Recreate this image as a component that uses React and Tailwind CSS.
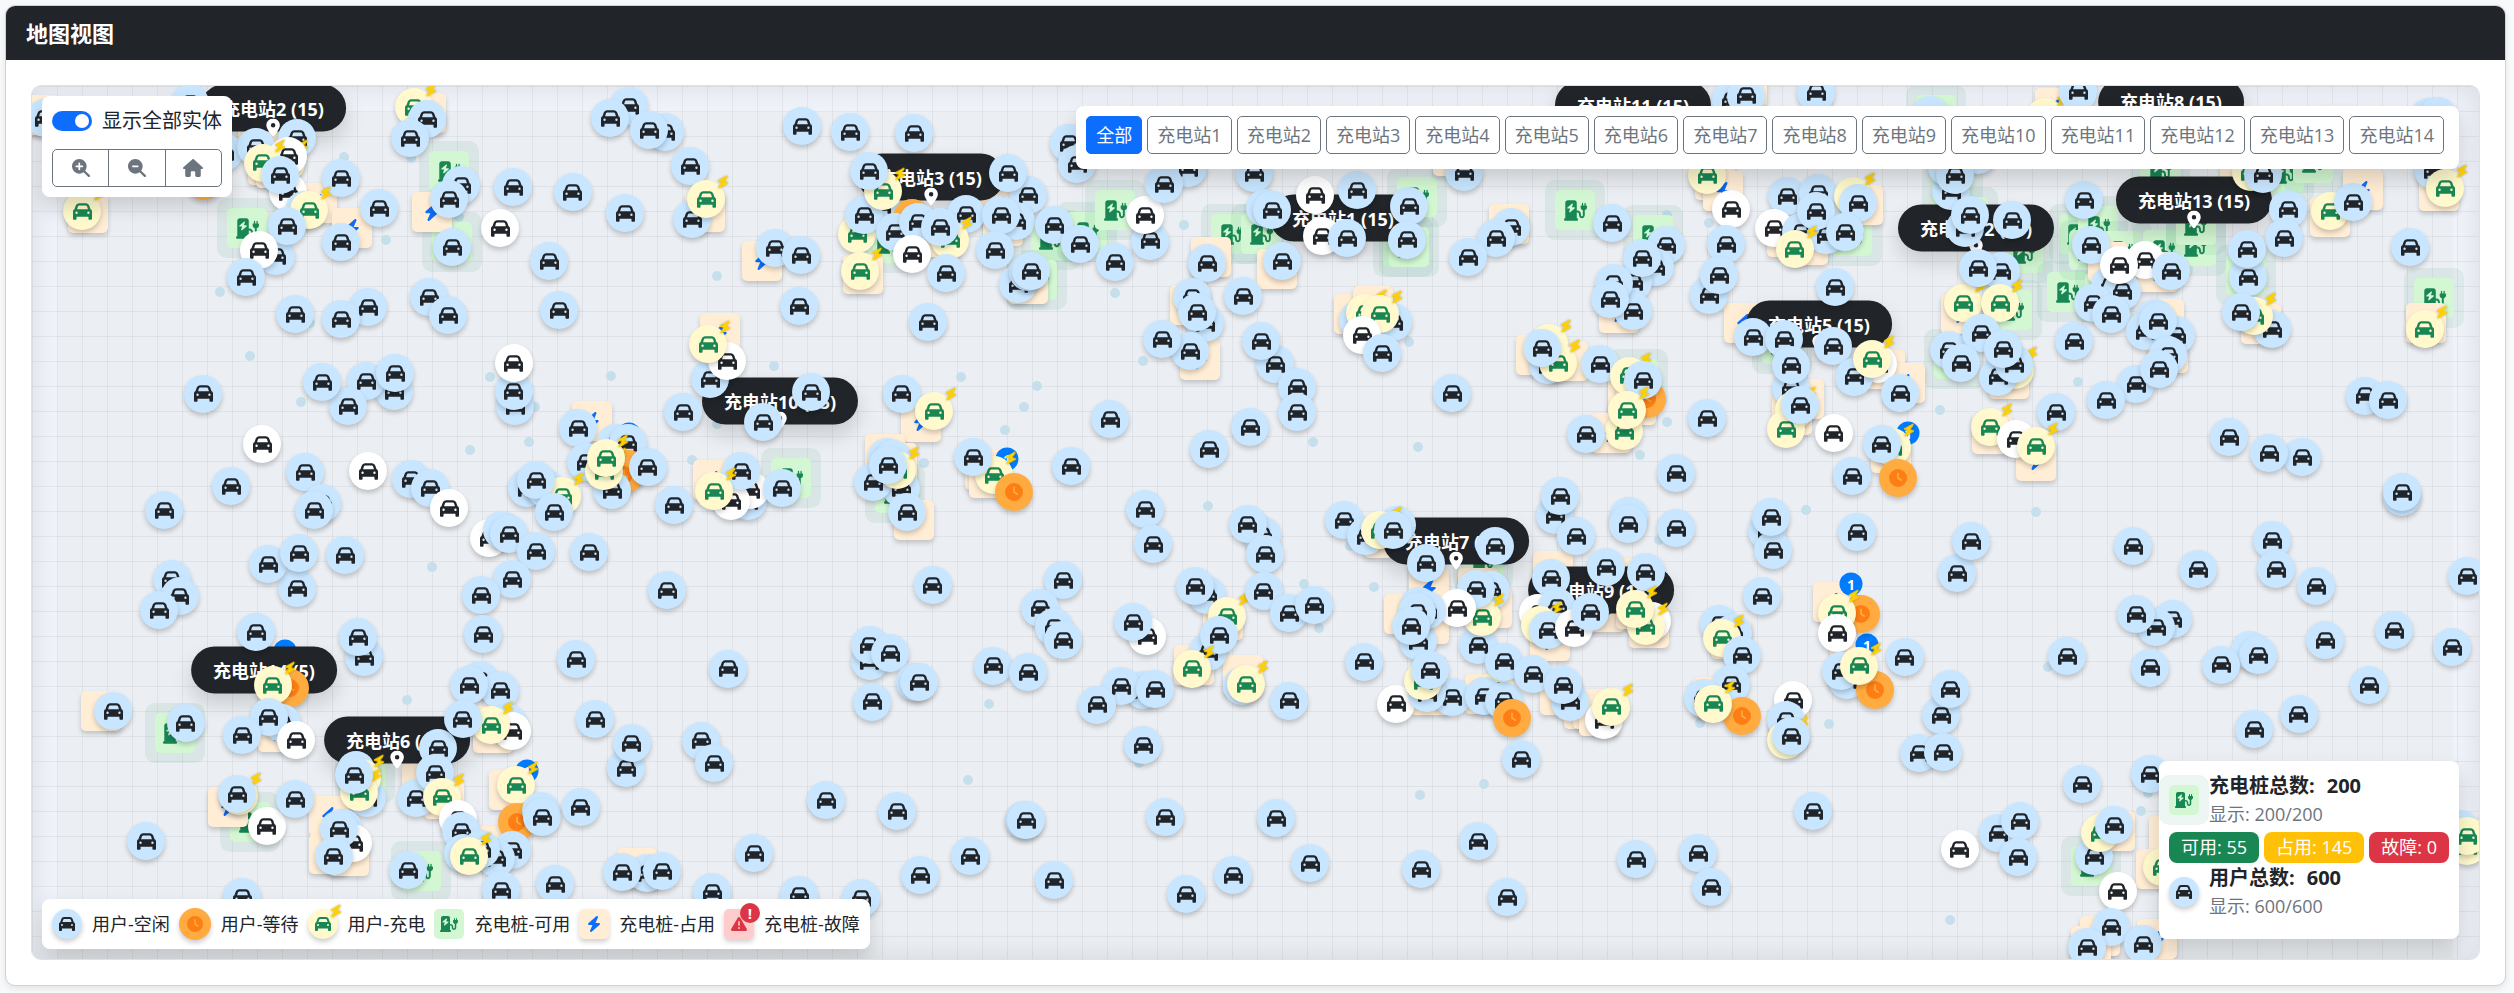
import React, { useState } from 'react';
import {
  FaCar,
  FaClock,
  FaBolt,
  FaChargingStation,
  FaLocationDot,
  FaMagnifyingGlassPlus,
  FaMagnifyingGlassMinus,
  FaHouse,
  FaTriangleExclamation,
} from 'react-icons/fa6';

// World rectangle that the map viewport shows.
const VIEW = { x: 32, y: 86, w: 2447, h: 873 };

const at = (x, y) => ({
  left: `${((x - VIEW.x) / VIEW.w) * 100}%`,
  top: `${((y - VIEW.y) / VIEW.h) * 100}%`,
});

const DOTS = [
  [344, 157], [411, 158], [386, 240], [220, 292], [250, 356], [301, 402], [490, 377], [611, 376], [535, 407],
  [529, 442], [470, 450], [459, 217], [310, 323], [717, 276], [774, 366], [961, 377], [1037, 386], [1024, 407],
  [1005, 430], [924, 463], [692, 460], [717, 424], [1115, 293], [1143, 361], [1184, 225], [1409, 342], [1313, 442],
  [1418, 447], [1667, 422], [1640, 455], [1709, 223], [1667, 215], [2078, 382], [1940, 410], [432, 567], [407, 700],
  [989, 704], [968, 780], [1208, 506], [1139, 763], [1304, 584], [1374, 587], [1319, 628], [1350, 546], [1484, 784],
  [1420, 795], [1806, 510], [1829, 724], [1700, 723], [1659, 540], [2036, 512], [2048, 667], [2141, 811],
  [1950, 920], [2148, 793],
];

const FREE_PILES = [
  [449, 171], [247, 228], [452, 242], [887, 243], [1051, 240], [1087, 232], [1115, 210], [1037, 280], [1231, 234],
  [1261, 234], [791, 478], [895, 493], [1417, 197], [1403, 247], [1409, 247], [1575, 210], [1653, 235], [1852, 236],
  [1638, 379], [1782, 344], [1936, 115], [1952, 190], [1968, 217], [2023, 253], [2012, 310], [1954, 359],
  [2067, 292], [2079, 234], [2089, 250], [2098, 226], [2122, 251], [2105, 293], [2163, 250], [2196, 246],
  [2196, 225], [2160, 170], [2284, 173], [2313, 163], [2246, 275], [2434, 298], [175, 733], [250, 822], [365, 773],
  [421, 871], [1483, 560], [2091, 866],
];

const BUSY_PILES = [
  [38, 115], [182, 115], [88, 213], [426, 113], [258, 130], [268, 165], [276, 168], [317, 203], [352, 228],
  [432, 212], [592, 421], [705, 212], [762, 261], [720, 333], [863, 274], [921, 422], [885, 454], [897, 463],
  [713, 480], [985, 470], [989, 478], [1000, 205], [1003, 226], [940, 237], [1028, 284], [1211, 257], [1190, 305],
  [1200, 360], [1277, 269], [914, 520], [1747, 86], [1453, 156], [1715, 180], [1723, 191], [1509, 224],
  [1863, 205], [1787, 237], [1808, 245], [1354, 314], [1373, 306], [1619, 313], [1536, 355], [1568, 361],
  [1628, 393], [1636, 405], [1611, 433], [1744, 323], [1804, 399], [1792, 415], [1885, 369], [1905, 383],
  [1891, 453], [2055, 108], [2339, 125], [2363, 190], [2330, 217], [2439, 191], [1961, 314], [2009, 379],
  [1992, 434], [2036, 461], [2108, 262], [2158, 272], [2164, 319], [2168, 353], [2261, 324], [2426, 323],
  [2240, 167], [101, 711], [278, 732], [493, 726], [493, 733], [228, 807], [329, 816], [329, 854], [349, 856],
  [422, 783], [444, 799], [509, 790], [482, 846], [637, 868], [1223, 620], [1194, 665], [1243, 675], [1384, 538],
  [1429, 588], [1404, 614], [1478, 588], [1492, 608], [1429, 624], [1553, 571], [1619, 578], [1430, 695],
  [1485, 694], [1560, 695], [1584, 709], [1593, 709], [1599, 716], [1550, 641], [1605, 612], [1649, 628],
  [1731, 639], [1713, 697], [1789, 726], [1833, 602], [1850, 663], [2115, 831], [2169, 836], [2156, 869],
  [2100, 936], [2091, 946], [2157, 939], [1636, 609],
];

const QUEUES = [[629, 434], [1007, 459], [1908, 433], [285, 651], [527, 771], [1851, 584], [1867, 645]];

const STATIONS = [
  ['充电站1 (15)', 1343, 218],
  ['充电站2 (15)', 273, 108],
  ['充电站3 (15)', 931, 177],
  ['充电站5 (15)', 1819, 324],
  ['充电站6 (15)', 397, 740],
  ['充电站7 (15)', 1456, 541],
  ['充电站8 (15)', 2171, 102],
  ['充电站9 (15)', 1601, 590],
  ['充电站10 (15)', 780, 401],
  ['充电站11 (15)', 1633, 105],
  ['充电站12 (15)', 1976, 228],
  ['充电站13 (15)', 2194, 200],
  ['充电站14 (5)', 264, 670],
];

const I = 'idle';
const W = 'moving';
const C = 'charging';
const Q = 'waiting';

const USERS = [
  [I, 45, 118], [I, 190, 103], [Q, 204, 181], [I, 224, 152], [C, 82, 211], [C, 414, 107], [I, 427, 119],
  [I, 410, 138], [I, 297, 138], [I, 256, 147], [C, 286, 163], [W, 288, 156], [C, 263, 163], [W, 288, 192],
  [I, 280, 175], [I, 341, 178], [I, 304, 210], [C, 309, 210], [I, 379, 208], [I, 276, 256], [I, 287, 226],
  [W, 259, 250], [I, 246, 277], [I, 341, 242], [I, 461, 185], [I, 449, 199], [I, 513, 187], [I, 573, 192],
  [I, 625, 213], [W, 500, 228], [I, 452, 247], [I, 549, 261], [I, 429, 297], [I, 448, 315], [I, 559, 310],
  [I, 368, 307], [I, 341, 319], [I, 295, 314], [I, 515, 406], [I, 514, 391], [W, 514, 363], [I, 394, 391],
  [I, 366, 381], [I, 395, 373], [I, 348, 406], [I, 322, 382], [I, 203, 394], [W, 262, 444], [W, 368, 471],
  [I, 578, 428], [I, 305, 472], [I, 231, 486], [I, 411, 479], [I, 430, 488], [W, 449, 508], [I, 629, 106],
  [I, 616, 443], [I, 628, 443], [I, 586, 462], [Q, 628, 469], [Q, 624, 475], [I, 612, 490], [C, 604, 471],
  [C, 606, 458], [I, 527, 488], [I, 545, 488], [C, 562, 496], [I, 536, 480], [I, 554, 512],
  [I, 610, 118], [I, 665, 132], [I, 649, 130], [I, 802, 126], [I, 850, 132], [I, 914, 133], [I, 690, 166],
  [I, 692, 219], [C, 706, 199], [I, 775, 248], [I, 801, 255], [I, 799, 306], [I, 928, 322], [C, 857, 234],
  [I, 881, 205], [I, 864, 215], [C, 883, 191], [I, 869, 171], [I, 966, 214], [Q, 912, 218], [I, 895, 232],
  [I, 918, 222], [C, 950, 240], [I, 940, 227], [W, 912, 254], [I, 946, 273], [C, 860, 271], [I, 1028, 195],
  [I, 1016, 221], [I, 1001, 215], [I, 1008, 173], [I, 995, 250], [I, 1054, 225], [I, 1080, 244], [I, 1115, 262],
  [I, 1150, 241], [W, 1145, 215], [I, 1018, 284], [I, 1028, 272], [I, 1031, 271], [I, 1069, 143], [I, 1077, 164],
  [I, 1188, 168], [I, 1164, 184], [I, 1254, 173], [I, 1207, 263], [I, 1265, 208], [I, 1272, 210], [I, 1192, 297],
  [I, 1205, 323], [I, 1197, 312], [I, 1190, 351], [I, 1162, 339], [I, 1243, 296], [I, 1275, 364], [I, 1261, 341],
  [I, 1110, 419], [I, 1250, 427], [I, 1209, 449], [I, 1071, 466], [I, 710, 379], [W, 727, 361], [C, 708, 344],
  [I, 683, 412], [I, 811, 392], [I, 763, 422], [I, 902, 394], [C, 934, 411], [I, 887, 457], [I, 893, 459],
  [I, 901, 488], [I, 873, 482], [C, 897, 470], [I, 888, 465], [I, 907, 512], [C, 994, 475], [I, 973, 457],
  [Q, 1014, 492], [I, 648, 467], [I, 748, 501], [W, 750, 490], [W, 731, 501], [I, 741, 471], [C, 714, 491],
  [I, 782, 488], [I, 674, 505], [I, 1145, 509],
  [I, 1731, 100], [I, 1746, 96], [I, 1816, 93], [I, 1464, 172], [W, 1315, 195], [I, 1357, 190], [W, 1322, 236],
  [I, 1347, 238], [I, 1409, 206], [I, 1407, 240], [I, 1282, 261], [I, 1511, 227], [I, 1496, 238], [I, 1468, 257],
  [I, 1612, 223], [I, 1666, 245], [I, 1655, 267], [I, 1633, 282], [I, 1642, 258], [I, 1633, 311], [I, 1614, 283],
  [I, 1610, 299], [I, 1358, 320], [I, 1393, 322], [C, 1365, 313], [C, 1380, 314], [W, 1362, 335], [I, 1382, 353],
  [I, 1452, 393], [I, 1297, 387], [I, 1297, 412], [C, 1549, 343], [I, 1548, 365], [C, 1558, 363], [I, 1542, 348],
  [I, 1600, 364], [C, 1629, 376], [Q, 1647, 399], [I, 1643, 380], [C, 1624, 431], [C, 1627, 410], [I, 1586, 434],
  [I, 1707, 418], [I, 1676, 473], [C, 1707, 175], [W, 1731, 209], [I, 1726, 244], [I, 1709, 295], [I, 1719, 275],
  [I, 1787, 196], [W, 1774, 228], [I, 1818, 193], [C, 1853, 196], [I, 1858, 203], [I, 1801, 232], [I, 1826, 235],
  [I, 1816, 211], [I, 1845, 232], [C, 1795, 249], [I, 1835, 287], [I, 1753, 337], [I, 1784, 339], [I, 1833, 346],
  [I, 1791, 388], [I, 1791, 365], [W, 1878, 364], [I, 1854, 377], [C, 1872, 359], [I, 1900, 393], [C, 1794, 410],
  [C, 1786, 429], [I, 1800, 405], [W, 1834, 433], [C, 1892, 447], [I, 1882, 444], [Q, 1898, 478], [I, 1852, 476],
  [I, 1930, 115], [C, 2045, 117], [I, 2078, 92], [I, 2429, 117], [I, 2438, 116], [I, 1951, 191], [I, 1978, 155],
  [I, 1947, 167], [I, 1955, 175], [I, 1965, 228], [I, 1970, 215], [I, 2012, 220], [I, 2001, 271], [C, 1963, 303],
  [I, 1978, 268], [C, 2000, 303], [I, 1949, 350], [I, 1981, 333], [I, 1961, 363], [C, 2015, 370], [I, 1998, 377],
  [I, 2014, 364], [I, 2003, 349], [C, 1990, 427], [W, 2016, 439], [I, 2056, 412], [C, 2036, 446], [I, 2074, 341],
  [I, 2084, 200], [I, 2091, 245], [I, 2110, 285], [W, 2145, 260], [I, 2122, 291], [W, 2119, 265], [I, 2171, 271],
  [I, 2093, 303], [I, 2111, 314], [I, 2155, 318], [I, 2145, 331], [I, 2176, 335], [I, 2158, 321], [I, 2168, 355],
  [I, 2136, 384], [I, 2159, 369], [I, 2106, 400], [C, 2251, 172], [I, 2263, 174], [I, 2288, 209], [I, 2284, 238],
  [I, 2248, 277], [I, 2247, 249], [I, 2272, 329], [C, 2254, 316], [I, 2241, 312], [C, 2330, 211], [I, 2353, 202],
  [I, 2410, 247], [I, 2433, 170], [C, 2445, 188], [C, 2425, 329], [I, 2365, 396], [I, 2388, 400], [I, 2229, 437],
  [I, 2302, 457], [I, 2269, 453], [I, 2402, 497], [I, 2402, 492],
  [I, 164, 510], [I, 322, 503], [I, 314, 510], [I, 297, 588], [I, 268, 564], [I, 299, 553], [I, 345, 555],
  [I, 172, 579], [I, 180, 596], [I, 159, 610], [I, 256, 632], [Q, 290, 688], [C, 273, 685], [I, 364, 657],
  [I, 358, 637], [W, 489, 538], [I, 502, 530], [I, 509, 534], [I, 536, 551], [I, 589, 552], [I, 512, 579],
  [I, 481, 595], [I, 483, 634], [I, 576, 659], [I, 480, 680], [I, 500, 690], [I, 469, 685], [I, 113, 711],
  [I, 186, 723], [I, 282, 723], [I, 269, 717], [I, 242, 735], [W, 296, 740], [I, 438, 748], [I, 508, 723],
  [W, 512, 731], [C, 491, 725], [I, 463, 719], [I, 595, 719], [I, 626, 768], [I, 632, 743], [C, 239, 796],
  [I, 237, 794], [W, 267, 826], [I, 295, 799], [I, 146, 841], [I, 356, 770], [I, 367, 798], [C, 362, 778],
  [C, 359, 792], [I, 354, 775], [I, 343, 828], [W, 353, 843], [I, 339, 829], [I, 334, 856], [I, 416, 798],
  [I, 435, 773], [C, 442, 797], [W, 458, 819], [I, 461, 831], [C, 516, 785], [Q, 517, 822], [I, 541, 811],
  [I, 542, 817], [I, 581, 807], [I, 512, 850], [I, 496, 858], [I, 463, 853], [I, 481, 849], [C, 469, 856],
  [I, 501, 890], [I, 555, 884], [I, 408, 870], [I, 242, 897], [I, 647, 873], [I, 622, 872], [I, 662, 871],
  [I, 667, 590], [I, 933, 585], [I, 728, 669], [I, 1063, 580], [I, 1040, 608], [I, 1054, 627], [I, 1063, 640],
  [I, 1153, 544], [I, 1262, 535], [I, 1248, 524], [I, 1265, 554], [I, 1207, 595], [I, 1195, 586], [C, 1227, 616],
  [I, 1208, 652], [I, 1219, 635], [C, 1192, 669], [I, 1242, 686], [C, 1246, 684], [I, 1264, 591], [W, 1147, 636],
  [I, 1133, 622], [I, 870, 661], [I, 870, 645], [I, 890, 653], [I, 872, 702], [I, 915, 682], [I, 919, 682],
  [I, 993, 666], [I, 1028, 672], [I, 1143, 690], [I, 1121, 686], [I, 1097, 705], [I, 1155, 689], [I, 1143, 745],
  [I, 701, 741], [I, 714, 763], [I, 826, 800], [I, 897, 811], [I, 754, 853], [I, 1024, 820], [I, 1026, 820],
  [I, 1165, 817], [I, 712, 892], [I, 799, 895], [I, 861, 898], [I, 920, 875], [I, 970, 856], [I, 1054, 880],
  [I, 1186, 894], [I, 1233, 875], [I, 1276, 818],
  [I, 1344, 520], [I, 1366, 536], [I, 1397, 525], [C, 1380, 530], [I, 1393, 530], [I, 1495, 546], [I, 1426, 563],
  [I, 1555, 515], [I, 1560, 496], [I, 1629, 516], [I, 1628, 524], [I, 1576, 536], [I, 1676, 528], [I, 1767, 531],
  [I, 1773, 550], [I, 1771, 517], [I, 1857, 532], [I, 1551, 578], [I, 1606, 567], [I, 1646, 572], [I, 1762, 596],
  [I, 1289, 613], [I, 1314, 605], [I, 1478, 645], [I, 1491, 590], [C, 1482, 617], [I, 1476, 589], [W, 1457, 608],
  [I, 1418, 641], [I, 1419, 606], [I, 1427, 610], [I, 1417, 612], [I, 1411, 626], [I, 1364, 662], [W, 1396, 704],
  [I, 1289, 701], [I, 1452, 697], [I, 1427, 693], [C, 1423, 681], [I, 1430, 670], [C, 1496, 690], [I, 1484, 696],
  [I, 1504, 701], [I, 1504, 662], [I, 1533, 674], [Q, 1512, 718], [I, 1570, 702], [I, 1563, 685], [W, 1604, 720],
  [C, 1611, 707], [I, 1521, 759], [W, 1538, 613], [I, 1557, 607], [C, 1540, 625], [I, 1548, 630], [W, 1574, 628],
  [I, 1590, 612], [W, 1652, 621], [C, 1646, 626], [C, 1635, 609], [I, 1719, 624], [I, 1733, 633], [C, 1722, 638],
  [I, 1742, 655], [I, 1731, 684], [I, 1703, 698], [Q, 1742, 716], [C, 1713, 704], [W, 1793, 700], [I, 1786, 720],
  [C, 1786, 740], [I, 1791, 736], [Q, 1861, 614], [C, 1837, 613], [W, 1837, 633], [I, 1847, 680], [I, 1841, 671],
  [Q, 1875, 690], [C, 1859, 666], [I, 1813, 811], [I, 1478, 841], [I, 1421, 869], [I, 1310, 863], [I, 1507, 897],
  [I, 1636, 859], [I, 1698, 853], [I, 1711, 887],
  [I, 1957, 573], [I, 1971, 541], [I, 2133, 546], [I, 2198, 569], [I, 2272, 540], [I, 2276, 569], [I, 2316, 586],
  [I, 2467, 576], [I, 2173, 619], [I, 2156, 627], [I, 2136, 614], [I, 2067, 656], [I, 2150, 668], [I, 1905, 657],
  [I, 2250, 650], [I, 2258, 655], [I, 2221, 665], [I, 2325, 640], [I, 2394, 630], [I, 2452, 647], [I, 2369, 685],
  [I, 2299, 714], [I, 2254, 729], [I, 1941, 715], [I, 1950, 689], [I, 1919, 753], [I, 1943, 752], [I, 2150, 774],
  [I, 2082, 784], [W, 1960, 849], [I, 1998, 833], [I, 2020, 821], [I, 2018, 857], [I, 2094, 856], [C, 2100, 833],
  [I, 2114, 825], [W, 2118, 891], [C, 2162, 867], [I, 2111, 927], [I, 2087, 947], [I, 2143, 944], [I, 2460, 829],
  [C, 2467, 846], [C, 2467, 836],
];

const USER_FILL = {
  idle: 'bg-[#c8e6ff] text-[#212529]',
  moving: 'bg-white text-[#212529]',
  charging: 'bg-[#fff9cd] text-[#198754]',
  waiting: 'bg-[#ffab40] text-[#fd7e14]',
};

function UserIcon({ kind, small }) {
  const box = small
    ? kind === 'waiting' ? 'size-8' : 'size-[30px]'
    : 'size-[38px]';
  const glyph = small ? 'size-4' : 'size-[19px]';
  return (
    <span className={`relative flex shrink-0 items-center justify-center rounded-full shadow-[0_3px_5px_rgba(0,0,0,0.2)] ${box} ${USER_FILL[kind]}`}>
      {kind === 'waiting' ? <FaClock className={small ? 'size-4' : 'size-[18px]'} /> : <FaCar className={glyph} />}
      {kind === 'charging' && (
        <FaBolt className="absolute -top-[5px] -right-[5px] size-[14px] rotate-12 text-[#ffd000] drop-shadow-[0_0_1px_rgba(0,0,0,0.3)]" />
      )}
    </span>
  );
}

function PileIcon({ kind, small }) {
  const box = small ? 'size-[30px]' : 'size-10';
  if (kind === 'free') {
    return (
      <span className={`flex shrink-0 items-center justify-center rounded-[5px] bg-[#d3f7d3] text-[#198754] ${box}`}>
        <FaChargingStation className={small ? 'size-[18px]' : 'size-[23px]'} />
      </span>
    );
  }
  if (kind === 'busy') {
    return (
      <span className={`flex shrink-0 items-center justify-center rounded-[5px] bg-[#ffedd5] text-[#0d6efd] shadow-[0_3px_5px_rgba(0,0,0,0.18)] ${box}`}>
        <FaBolt className={small ? 'size-4' : 'size-[18px]'} />
      </span>
    );
  }
  return (
    <span className={`relative flex shrink-0 items-center justify-center rounded-[5px] bg-[#ffcccc] text-[#dc3545] shadow-[0_3px_5px_rgba(0,0,0,0.18)] ${box}`}>
      <FaTriangleExclamation className="size-4" />
      <span className="absolute -top-[6px] -right-[6px] flex size-5 items-center justify-center rounded-full bg-[#dc3545] text-[15px] leading-none font-bold text-white">
        !
      </span>
    </span>
  );
}

const FILTERS = ['全部', ...Array.from({ length: 14 }, (_, i) => `充电站${i + 1}`)];

const LEGEND = [
  ['用户-空闲', <UserIcon key="i" kind="idle" small />],
  ['用户-等待', <UserIcon key="q" kind="waiting" small />],
  ['用户-充电', <UserIcon key="c" kind="charging" small />],
  ['充电桩-可用', <PileIcon key="f" kind="free" small />],
  ['充电桩-占用', <PileIcon key="b" kind="busy" small />],
  ['充电桩-故障', <PileIcon key="x" kind="fault" small />],
];

const PANEL = 'absolute z-10 rounded-lg bg-white shadow-[0_10px_20px_rgba(0,0,0,0.15)]';
const SPOT = 'absolute -translate-x-1/2 -translate-y-1/2';

function Markers() {
  return (
    <>
      {DOTS.map(([x, y], i) => (
        <span key={`d${i}`} className={`${SPOT} size-[10px] rounded-full bg-[#c6dfec]`} style={at(x, y)} />
      ))}
      {FREE_PILES.map(([x, y], i) => (
        <span key={`f${i}`} className={`${SPOT} rounded-[10px] bg-[#198754]/8 p-[10px]`} style={at(x, y)}>
          <PileIcon kind="free" />
        </span>
      ))}
      {BUSY_PILES.map(([x, y], i) => (
        <span key={`b${i}`} className={SPOT} style={at(x, y)}>
          <PileIcon kind="busy" />
        </span>
      ))}
      {QUEUES.map(([x, y], i) => (
        <span
          key={`q${i}`}
          className={`${SPOT} flex size-[23px] items-center justify-center rounded-full bg-[#007bff] text-[14px] leading-none font-bold text-white`}
          style={at(x, y)}
        >
          1
        </span>
      ))}
      {STATIONS.map(([name, x, y]) => (
        <div
          key={name}
          className={`${SPOT} flex h-[47px] items-center rounded-full bg-[#212529] px-[22px] text-[18px] leading-none font-bold whitespace-nowrap text-white shadow-[0_10px_20px_rgba(0,0,0,0.15)]`}
          style={at(x, y)}
        >
          {name}
          <FaLocationDot className="absolute -bottom-[5px] left-1/2 size-[18px] -translate-x-1/2" />
        </div>
      ))}
      {USERS.map(([kind, x, y], i) => (
        <span key={`u${i}`} className={SPOT} style={at(x, y)}>
          <UserIcon kind={kind} />
        </span>
      ))}
    </>
  );
}

function Summary({ icon, title, value, shown }) {
  return (
    <div className="flex items-center">
      <div className="mr-[10px] flex">{icon}</div>
      <div>
        <div className="text-[20px] leading-[30px] font-bold">
          {title}:<span className="ml-3">{value}</span>
        </div>
        <div className="text-[18px] leading-[27px] text-[#6c757d]">显示: {shown}</div>
      </div>
    </div>
  );
}

export default function App() {
  const [showAll, setShowAll] = useState(true);
  const [active, setActive] = useState('全部');

  return (
    <div className="min-h-screen bg-[#f8f9fa] pt-[5px] pr-2 pb-[7px] pl-[5px] font-['Open_Sans','Noto_Sans_CJK_SC',sans-serif] text-[#212529]">
      <section className="overflow-hidden rounded-[10px] border border-[#d0d3d6] bg-white shadow-[0_3px_6px_rgba(0,0,0,0.08)]">
        <header className="flex h-[54px] items-center bg-[#212529] px-5">
          <h1 className="text-[22px] leading-7 font-bold text-white">地图视图</h1>
        </header>
        <div className="p-[25px]">
          <div className="relative h-[875px] overflow-hidden rounded-[10px] border border-[#dee2e6] bg-[#ebeef2]">
            <div className="absolute inset-0 bg-[#f0f3f9]" />
            <div className="absolute inset-x-[26px] top-[26px] bottom-0 bg-[#ebeef2]" />
            <div className="absolute inset-0 bg-[linear-gradient(rgba(0,0,0,0.05)_1px,transparent_1px),linear-gradient(90deg,rgba(0,0,0,0.05)_1px,transparent_1px)] bg-size-[25px_25px]" />
            <div className="absolute inset-0 shadow-[inset_0_0_30px_rgba(0,0,0,0.1)]" />
            <Markers />

            <div className={`${PANEL} top-[10px] left-[10px] p-[10px]`}>
              <label className="flex h-[30px] items-center gap-[10px] text-[20px] leading-[30px]">
                <input
                  type="checkbox"
                  checked={showAll}
                  onChange={(e) => setShowAll(e.target.checked)}
                  className="flex h-5 w-10 appearance-none items-center rounded-full bg-[#adb5bd] px-[3px] before:size-[14px] before:rounded-full before:bg-white before:content-[''] checked:justify-end checked:bg-[#0d6efd]"
                />
                显示全部实体
              </label>
              <div className="mt-[13px] flex h-[38px] divide-x divide-[#6c757d] overflow-hidden rounded-[5px] border border-[#6c757d] text-[#6c757d]">
                <button type="button" aria-label="放大" className="flex flex-1 items-center justify-center">
                  <FaMagnifyingGlassPlus className="size-[18px]" />
                </button>
                <button type="button" aria-label="缩小" className="flex flex-1 items-center justify-center">
                  <FaMagnifyingGlassMinus className="size-[18px]" />
                </button>
                <button type="button" aria-label="重置" className="flex flex-1 items-center justify-center">
                  <FaHouse className="h-[18px] w-5" />
                </button>
              </div>
            </div>

            <div className={`${PANEL} top-5 right-5 flex gap-[5px] pt-[10px] pr-[15px] pb-[15px] pl-[10px]`}>
              {FILTERS.map((name) => (
                <button
                  key={name}
                  type="button"
                  onClick={() => setActive(name)}
                  className={`h-[38px] rounded-[5px] border px-[9px] text-[18px] leading-6 whitespace-nowrap ${
                    active === name ? 'border-[#0d6efd] bg-[#0d6efd] text-white' : 'border-[#6c757d] text-[#6c757d]'
                  }`}
                >
                  {name}
                </button>
              ))}
            </div>

            <ul className={`${PANEL} bottom-[10px] left-[10px] flex h-[50px] items-center gap-[9px] px-[10px]`}>
              {LEGEND.map(([name, icon]) => (
                <li key={name} className="flex items-center gap-[10px] text-[18px] leading-[26px] whitespace-nowrap">
                  {icon}
                  {name}
                </li>
              ))}
            </ul>

            <div className={`${PANEL} right-5 bottom-5 w-[300px] px-[10px] pt-[10px] pb-[19px]`}>
              <Summary
                icon={
                  <span className="-m-[10px] rounded-[10px] bg-[#198754]/8 p-[10px]">
                    <PileIcon kind="free" small />
                  </span>
                }
                title="充电桩总数"
                value="200"
                shown="200/200"
              />
              <div className="mt-1 flex gap-[5px] text-[18px] leading-[31px] whitespace-nowrap text-white">
                <span className="rounded-lg bg-[#198754] px-3">可用: 55</span>
                <span className="rounded-lg bg-[#ffc107] px-3">占用: 145</span>
                <span className="rounded-lg bg-[#dc3545] px-3">故障: 0</span>
              </div>
              <Summary icon={<UserIcon kind="idle" small />} title="用户总数" value="600" shown="600/600" />
            </div>
          </div>
        </div>
      </section>
    </div>
  );
}
